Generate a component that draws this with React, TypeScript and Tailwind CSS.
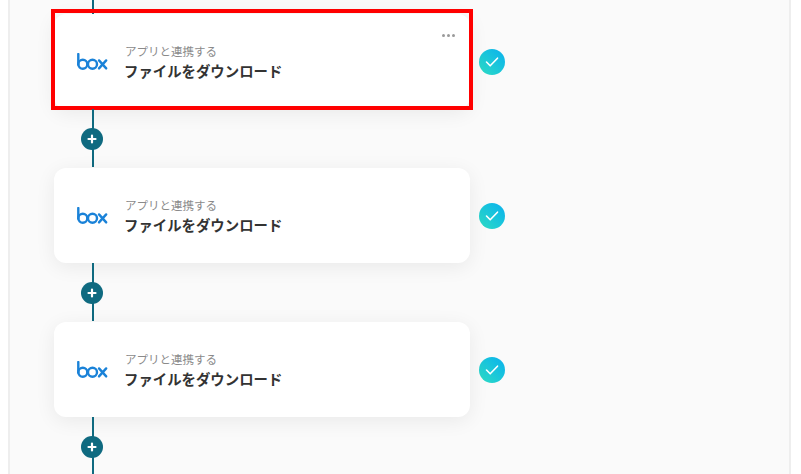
import React from "react";

const font = { fontFamily: '"Noto Sans CJK JP", "Noto Sans", sans-serif' };

function BoxLogo() {
  return (
    <svg width="31" height="18" viewBox="0 0 31 18" fill="none" stroke="#1a82d8" strokeWidth="2.4">
      <path d="M1.3 1v10.6" strokeLinecap="round" />
      <circle cx="5.8" cy="11.3" r="4.5" />
      <circle cx="15.5" cy="11.3" r="4.5" />
      <path d="M22 7.4l7.2 8M29.2 7.4l-7.2 8" strokeLinecap="round" />
    </svg>
  );
}

function Card({ highlighted }: { highlighted?: boolean }) {
  return (
    <div className="relative flex h-[95px] items-center">
      <div className="relative flex h-[95px] w-[416px] items-center rounded-xl bg-white pl-[23px] shadow-[0_4px_20px_rgba(0,0,0,0.07)]">
        <div className="flex w-[48px] shrink-0 items-center">
          <BoxLogo />
        </div>
        <div className="flex flex-col">
          <span className="text-[11.5px] leading-[16px] text-[#8a8a8a]">アプリと連携する</span>
          <span className="ml-[-1px] mt-[2px] text-[14.4px] font-bold leading-[20px] text-[#333333]">ファイルをダウンロード</span>
        </div>
        {highlighted && (
          <div className="absolute right-[15px] top-[20px] flex gap-[2px]">
            <span className="h-[3px] w-[3px] rounded-full bg-[#9a9a9a]" />
            <span className="h-[3px] w-[3px] rounded-full bg-[#9a9a9a]" />
            <span className="h-[3px] w-[3px] rounded-full bg-[#9a9a9a]" />
          </div>
        )}
      </div>
      <div className="ml-[9px] flex h-[26px] w-[26px] items-center justify-center rounded-full bg-linear-to-tr from-[#2fdcc2] to-[#0cb0ee]">
        <svg width="14" height="14" viewBox="0 0 14 14" fill="none" stroke="#fff" strokeWidth="1.6" strokeLinecap="round" strokeLinejoin="round">
          <path d="M1.5 7l3.7 3.8 7.3-7.6" />
        </svg>
      </div>
      {highlighted && (
        <div className="pointer-events-none absolute left-[-3px] top-[-5px] h-[101px] w-[422px] border-4 border-[#ff0000]" />
      )}
    </div>
  );
}

function Connector() {
  return (
    <div className="relative flex h-[59px] w-[416px] flex-col pl-[38px]">
      <div className="h-[58px] w-[2px] bg-[#0f6a80]" />
      <div className="absolute left-[27px] top-[19px] flex h-[22px] w-[22px] items-center justify-center rounded-full bg-[#0f6a80]">
        <svg width="10" height="10" viewBox="0 0 10 10" stroke="#fff" strokeWidth="2.2" strokeLinecap="round">
          <path d="M5 1.5v7M1.5 5h7" />
        </svg>
      </div>
    </div>
  );
}

export default function App() {
  return (
    <div className="h-[474px] w-[801px] overflow-hidden bg-white" style={font}>
      <div className="ml-2 h-[474px] w-[783px] border-x-2 border-[#eeeeee] bg-[#fafafa] pl-[44px]">
        <div className="ml-[38px] h-[14px] w-[2px] bg-[#0f6a80]" />
        <Card highlighted />
        <Connector />
        <Card />
        <Connector />
        <Card />
        <Connector />
      </div>
    </div>
  );
}
